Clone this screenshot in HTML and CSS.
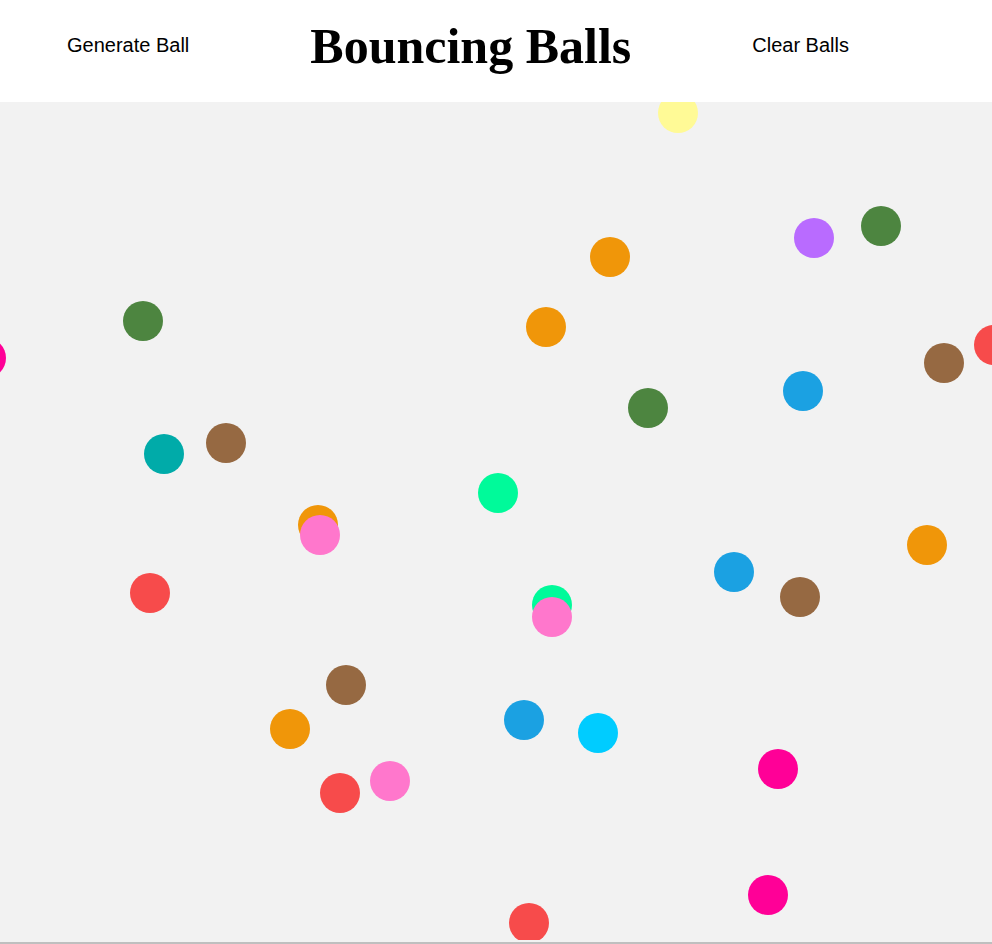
FILE: index.html
```html
<!DOCTYPE html>
<html lang="en">
<head>
  <meta charset="UTF-8">
  <title>Bouncing Balls</title>
  <link rel="stylesheet" href="styles.css">
</head>
<body>

  <header class="topbar">
    <button class="btn" id="generate">Generate Ball</button>
    <h1 class="title">Bouncing Balls</h1>
    <button class="btn" id="clear">Clear Balls</button>
  </header>

  <main class="canvas" id="canvas">
    <div class="ball yellow" style="left:658px;top:-9px"></div>
    <div class="ball orange" style="left:590px;top:135px"></div>
    <div class="ball purple" style="left:794px;top:116px"></div>
    <div class="ball green" style="left:861px;top:104px"></div>
    <div class="ball green" style="left:123px;top:199px"></div>
    <div class="ball orange" style="left:526px;top:205px"></div>
    <div class="ball magenta" style="left:-34px;top:236px"></div>
    <div class="ball red" style="left:974px;top:223px"></div>
    <div class="ball brown" style="left:924px;top:241px"></div>
    <div class="ball blue" style="left:783px;top:269px"></div>
    <div class="ball green" style="left:628px;top:286px"></div>
    <div class="ball teal" style="left:144px;top:332px"></div>
    <div class="ball brown" style="left:206px;top:321px"></div>
    <div class="ball mint" style="left:478px;top:371px"></div>
    <div class="ball orange" style="left:298px;top:403px"></div>
    <div class="ball pink" style="left:300px;top:413px"></div>
    <div class="ball orange" style="left:907px;top:423px"></div>
    <div class="ball blue" style="left:714px;top:450px"></div>
    <div class="ball brown" style="left:780px;top:475px"></div>
    <div class="ball red" style="left:130px;top:471px"></div>
    <div class="ball mint" style="left:532px;top:483px"></div>
    <div class="ball pink" style="left:532px;top:495px"></div>
    <div class="ball brown" style="left:326px;top:563px"></div>
    <div class="ball orange" style="left:270px;top:607px"></div>
    <div class="ball blue" style="left:504px;top:598px"></div>
    <div class="ball cyan" style="left:578px;top:611px"></div>
    <div class="ball magenta" style="left:758px;top:647px"></div>
    <div class="ball pink" style="left:370px;top:659px"></div>
    <div class="ball red" style="left:320px;top:671px"></div>
    <div class="ball magenta" style="left:748px;top:773px"></div>
    <div class="ball red" style="left:509px;top:801px"></div>
  </main>
  <div class="floor"></div>

</body>
</html>
```

FILE: styles.css
```css
html, body {
  margin: 0;
  padding: 0;
}
body {
  background: #f2f2f2;
  overflow: hidden;
}
.topbar {
  display: flex;
  align-items: center;
  gap: 121px;
  height: 102px;
  padding-left: 67px;
  background: #fff;
}
.btn {
  font-family: "Liberation Sans", Arial, sans-serif;
  font-size: 20px;
  color: #000;
  background: none;
  border: none;
  padding: 0;
  margin: 0 0 12px 0;
  cursor: pointer;
}
.title {
  font-family: "Liberation Serif", "Times New Roman", serif;
  font-size: 50px;
  font-weight: bold;
  line-height: 1;
  margin: 0 0 10px 0;
}
.canvas {
  position: relative;
  height: 838px;
  overflow: hidden;
  background: #f2f2f2;
}
.floor {
  margin-top: 2px;
  border-top: 2px solid #bfbfbf;
}
.ball {
  position: absolute;
  width: 40px;
  height: 40px;
  border-radius: 50%;
}
.yellow { background: #fffa96; }
.orange { background: #f09609; }
.purple { background: #b96bff; }
.green { background: #4d8540; }
.magenta { background: #ff0097; }
.red { background: #f74b4b; }
.brown { background: #966942; }
.blue { background: #1ba1e2; }
.teal { background: #00aba9; }
.mint { background: #00fa9a; }
.pink { background: #ff77cc; }
.cyan { background: #00ccff; }
```
